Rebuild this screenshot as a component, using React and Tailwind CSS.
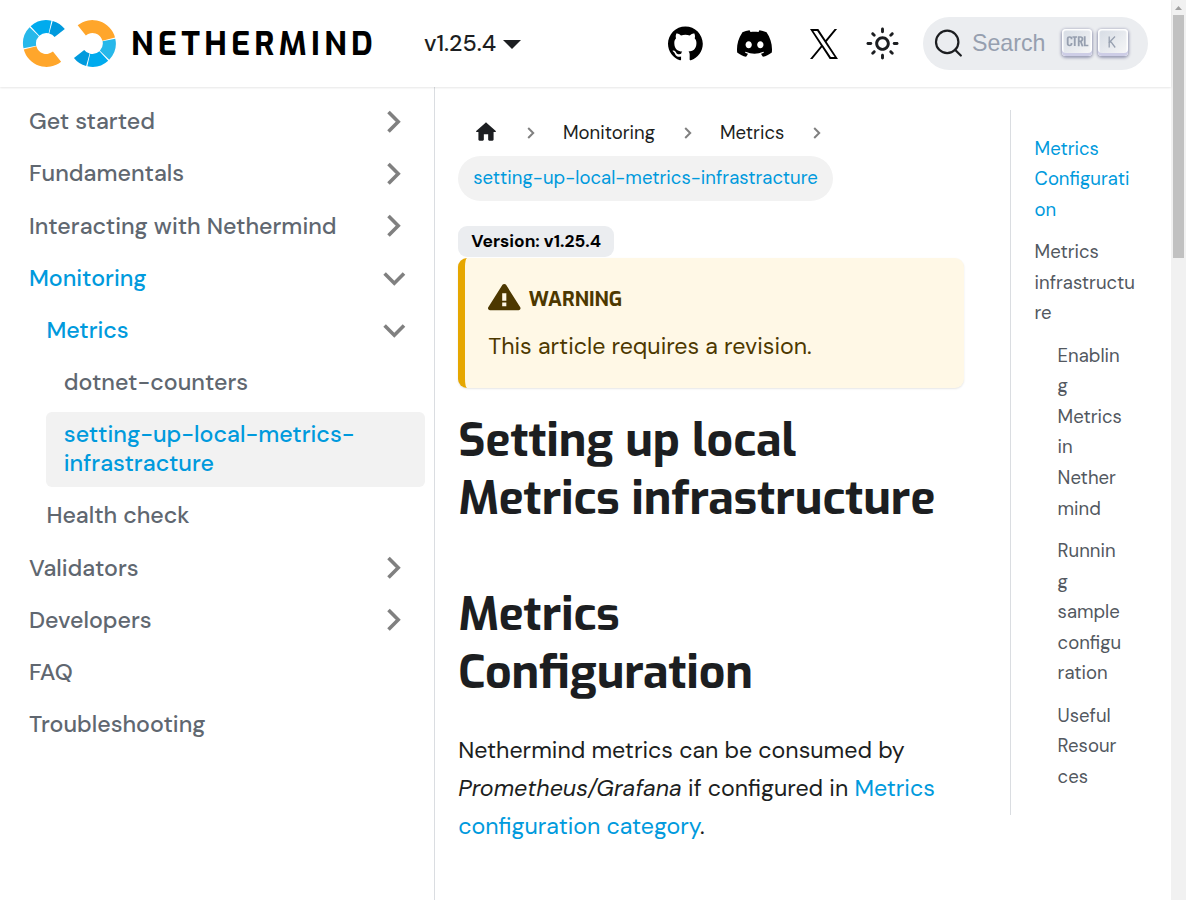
import React from "react";

const polar = (cx, cy, r, deg) => {
  const a = (deg * Math.PI) / 180;
  return `${(cx + r * Math.cos(a)).toFixed(2)} ${(cy - r * Math.sin(a)).toFixed(2)}`;
};

const segment = (a0, a1) =>
  `M${polar(24, 24, 23.4, a0)}A23.4 23.4 0 0 0 ${polar(24, 24, 23.4, a1)}L${polar(24, 24, 10.4, a1)}A10.4 10.4 0 0 1 ${polar(24, 24, 10.4, a0)}Z`;

const ring = [
  [38, 74.5, "#009add"],
  [77.5, 132.5, "#00abee"],
  [136, 192, "#27b8ea"],
  [195, 309, "#ffa62b"],
];

function Ring() {
  return ring.map(([a, b, c]) => <path key={a} d={segment(a, b)} fill={c} />);
}

function Logo() {
  return (
    <svg className="-mt-px h-12 w-[94px] shrink-0" viewBox="0 0 94 48">
      <g transform="translate(.4 .5)">
        <Ring />
        <g transform="rotate(180 47 24)">
          <Ring />
        </g>
      </g>
    </svg>
  );
}

function Chevron({ open }) {
  return (
    <span className="flex w-[63px] shrink-0 items-center justify-center">
      <svg className={open ? "mt-px size-6 rotate-90" : "size-6"} viewBox="0 0 24 24" fill="none" stroke="#808080" strokeWidth="3.6">
        <path d="M6.5 2 L16.2 11.7 L6.5 21.4" />
      </svg>
    </span>
  );
}

const menu = [
  { t: "Get started", arrow: "closed" },
  { t: "Fundamentals", arrow: "closed" },
  { t: "Interacting with Nethermind", arrow: "closed" },
  { t: "Monitoring", arrow: "open", on: true },
  { t: "Metrics", arrow: "open", on: true, indent: "ml-[17.4px]" },
  { t: "dotnet-counters", indent: "ml-[34.8px]" },
  { lines: ["setting-up-local-metrics-", "infrastracture"], on: true, active: true, indent: "ml-[34.8px]" },
  { t: "Health check", indent: "ml-[17.4px]" },
  { t: "Validators", arrow: "closed" },
  { t: "Developers", arrow: "closed" },
  { t: "FAQ" },
  { t: "Troubleshooting" },
];

function Sidebar() {
  return (
    <aside className="w-[435px] shrink-0 border-r border-[#dadde1] py-[11.6px] pr-[9px] pl-[11.6px]">
      <ul className="flex flex-col gap-[5.8px]">
        {menu.map((m, i) => (
          <li
            key={i}
            className={`flex justify-between rounded-[5.8px] text-[23.2px] leading-[29px] font-medium whitespace-nowrap ${m.indent || ""} ${m.on ? "text-[#009add]" : "text-[#606770]"} ${m.active ? "bg-[#f2f2f2]" : ""}`}
          >
            <a className="py-[8.7px] pl-[17.4px]">
              {m.t || m.lines.map((l) => <span key={l} className="block">{l}</span>)}
            </a>
            {m.arrow && <Chevron open={m.arrow === "open"} />}
          </li>
        ))}
      </ul>
    </aside>
  );
}

function Key({ children }) {
  return (
    <kbd className="flex h-[27px] w-[30px] items-center justify-center rounded-[4px] bg-linear-to-br from-[#d5dbe4] to-[#f8f8f8] pb-[2px] text-[#969faf] shadow-[inset_0_-3px_0_0_#cdcde6,inset_0_0_1px_1.5px_#fff,0_1px_3px_1px_rgba(30,35,90,0.4)]">
      {children}
    </kbd>
  );
}

function Navbar() {
  return (
    <header className="relative z-10 flex h-[87px] shrink-0 items-center bg-white pr-[23px] pl-[22px] shadow-[0_1px_2px_0_rgba(0,0,0,0.1)]">
      <Logo />
      <span className="ml-[15px] w-[292.500px] font-['Exo','Roboto',sans-serif] text-[32px] leading-none font-bold tracking-[4.250px] text-black">NETHERMIND</span>
      <span className="flex w-[244.500px] items-center pl-[.5px] text-[23.2px] font-medium text-[#1c1e21]">
        v1.25.4
        <svg className="mt-[2px] ml-[7px] h-[9px] w-[18px]" viewBox="0 0 18 9"><path d="M0 0H18L9 9Z" fill="currentColor" /></svg>
      </span>
      <svg className="size-[34.800px] shrink-0" viewBox="0 0 24 24">
        <path d="M12 .297c-6.63 0-12 5.373-12 12 0 5.303 3.438 9.8 8.205 11.385.6.113.82-.258.82-.577 0-.285-.01-1.04-.015-2.04-3.338.724-4.042-1.61-4.042-1.61C4.422 18.07 3.633 17.7 3.633 17.7c-1.087-.744.084-.729.084-.729 1.205.084 1.838 1.236 1.838 1.236 1.07 1.835 2.809 1.305 3.495.998.108-.776.417-1.305.76-1.605-2.665-.3-5.466-1.332-5.466-5.93 0-1.31.465-2.38 1.235-3.22-.135-.303-.54-1.523.105-3.176 0 0 1.005-.322 3.3 1.23.96-.267 1.98-.399 3-.405 1.02.006 2.04.138 3 .405 2.28-1.552 3.285-1.23 3.285-1.23.645 1.653.24 2.873.12 3.176.765.84 1.23 1.91 1.23 3.22 0 4.61-2.805 5.625-5.475 5.92.42.36.81 1.096.81 2.22 0 1.606-.015 2.896-.015 3.286 0 .315.21.69.825.57C20.565 22.092 24 17.592 24 12.297c0-6.627-5.373-12-12-12" />
      </svg>
      <svg className="ml-[34px] size-[35px] shrink-0" viewBox="0 0 24 24">
        <path d="M20.317 4.3698a19.7913 19.7913 0 00-4.8851-1.5152.0741.0741 0 00-.0785.0371c-.211.3753-.4447.8648-.6083 1.2495-1.8447-.2762-3.68-.2762-5.4868 0-.1636-.3933-.4058-.8742-.6177-1.2495a.077.077 0 00-.0785-.037 19.7363 19.7363 0 00-4.8852 1.515.0699.0699 0 00-.0321.0277C.5334 9.0458-.319 13.5799.0992 18.0578a.0824.0824 0 00.0312.0561c2.0528 1.5076 4.0413 2.4228 5.9929 3.0294a.0777.0777 0 00.0842-.0276c.4616-.6304.8731-1.2952 1.226-1.9942a.076.076 0 00-.0416-.1057c-.6528-.2476-1.2743-.5495-1.8722-.8923a.077.077 0 01-.0076-.1277c.1258-.0943.2517-.1923.3718-.2914a.0743.0743 0 01.0776-.0105c3.9278 1.7933 8.18 1.7933 12.0614 0a.0739.0739 0 01.0785.0095c.1202.099.246.1981.3728.2924a.077.077 0 01-.0066.1276 12.2986 12.2986 0 01-1.873.8914.0766.0766 0 00-.0407.1067c.3604.698.7719 1.3628 1.225 1.9932a.076.076 0 00.0842.0286c1.961-.6067 3.9495-1.5219 6.0023-3.0294a.077.077 0 00.0313-.0552c.5004-5.177-.8382-9.6739-3.5485-13.6604a.061.061 0 00-.0312-.0286zM8.02 15.3312c-1.1825 0-2.1569-1.0857-2.1569-2.419 0-1.3332.9555-2.4189 2.157-2.4189 1.2108 0 2.1757 1.0952 2.1568 2.419 0 1.3332-.9555 2.4189-2.1569 2.4189zm7.9748 0c-1.1825 0-2.1569-1.0857-2.1569-2.419 0-1.3332.9554-2.4189 2.1569-2.4189 1.2108 0 2.1757 1.0952 2.1568 2.419 0 1.3332-.946 2.4189-2.1568 2.4189Z" />
      </svg>
      <svg className="ml-[38px] h-[30px] w-[28px] shrink-0" viewBox="0 0 1200 1227" preserveAspectRatio="none">
        <path d="M714.163 519.284L1160.89 0H1055.03L667.137 450.887L357.328 0H0L468.492 681.821L0 1226.37H105.866L515.491 750.218L842.672 1226.37H1200L714.137 519.284H714.163ZM569.165 687.828L521.697 619.934L144.011 79.6944H306.615L611.412 515.685L658.88 583.579L1055.08 1150.3H892.476L569.165 687.854V687.828Z" />
      </svg>
      <svg className="ml-[27px] size-[35px] shrink-0" viewBox="0 0 24 24">
        <path fill="#1c1e21" d="M12,9c1.65,0,3,1.35,3,3s-1.35,3-3,3s-3-1.35-3-3S10.35,9,12,9 M12,7c-2.76,0-5,2.24-5,5s2.24,5,5,5s5-2.24,5-5 S14.76,7,12,7L12,7z M2,13l2,0c0.55,0,1-0.45,1-1s-0.45-1-1-1l-2,0c-0.55,0-1,0.45-1,1S1.45,13,2,13z M20,13l2,0c0.55,0,1-0.45,1-1 s-0.45-1-1-1l-2,0c-0.55,0-1,0.45-1,1S19.45,13,20,13z M11,2v2c0,0.55,0.45,1,1,1s1-0.45,1-1V2c0-0.55-0.45-1-1-1S11,1.45,11,2z M11,20v2c0,0.55,0.45,1,1,1s1-0.45,1-1v-2c0-0.55-0.45-1-1-1C11.45,19,11,19.45,11,20z M5.99,4.58c-0.39-0.39-1.03-0.39-1.41,0 c-0.39,0.39-0.39,1.03,0,1.41l1.06,1.06c0.39,0.39,1.03,0.39,1.41,0s0.39-1.03,0-1.41L5.99,4.58z M18.36,16.95 c-0.39-0.39-1.03-0.39-1.41,0c-0.39,0.39-0.39,1.03,0,1.41l1.06,1.06c0.39,0.39,1.03,0.39,1.41,0c0.39-0.39,0.39-1.03,0-1.41 L18.36,16.95z M19.42,5.99c0.39-0.39,0.39-1.03,0-1.41c-0.39-0.39-1.03-0.39-1.41,0l-1.06,1.06c-0.39,0.39-0.39,1.03,0,1.41 s1.03,0.39,1.41,0L19.42,5.99z M7.05,18.36c0.39-0.39,0.39-1.03,0-1.41c-0.39-0.39-1.03-0.39-1.41,0l-1.06,1.06 c-0.39,0.39-0.39,1.03,0,1.41s1.03,0.39,1.41,0L7.05,18.36z" />
      </svg>
      <button className="ml-auto flex h-[53px] w-[225px] items-center rounded-full bg-[#ebedf0] pl-[12px]">
        <svg className="-mt-px -ml-px size-[28px]" viewBox="0 0 28 28" fill="none" stroke="#1c1e21" strokeWidth="2.2">
          <circle cx="13.2" cy="12.9" r="11.2" /><path d="M21 20.7L26.8 26.5" strokeLinecap="round" />
        </svg>
        <span className="ml-[10px] w-[90px] text-left font-['Liberation_Sans'] text-[23.2px] text-[#969faf]">Search</span>
        <span className="-mt-[2px] flex gap-[6px]">
          <Key>
            <svg className="h-[11px] w-[23px]" viewBox="0 0 15 8.5" preserveAspectRatio="none" fill="none" stroke="#969faf" strokeWidth="1.2">
              <path d="M3.6 2.5V2c0-.8-.5-1.3-1.2-1.3S1.1 1.200 1.100 2v4c0 .8.500 1.300 1.300 1.300S3.600 6.800 3.600 6V5.500M4.200.8h3M5.700.8v7M8.300 8V.8h1.200c1.600 0 1.600 3.200 0 3.200H8.300M9.600 4l1.200 4M12.200.2v7.200h2.400" />
            </svg>
          </Key>
          <Key>
            <svg className="mr-[2px] h-[12px] w-[8px]" viewBox="0 0 8 12" fill="none" stroke="#969faf" strokeWidth="1.3">
              <path d="M1.200 .5V11.500M7 .5L1.400 6.200H3.200L7.200 11.500" />
            </svg>
          </Key>
        </span>
      </button>
    </header>
  );
}

function CrumbArrow() {
  return (
    <svg className="h-[12px] w-[8px] shrink-0" viewBox="0 0 8 12" fill="none" stroke="#808080" strokeWidth="2">
      <path d="M1.200 1L6.200 6L1.200 11" />
    </svg>
  );
}

function Article() {
  return (
    <main className="mr-[.8px] ml-[23.200px] flex w-[506px] shrink-0 flex-col pt-[23px] whitespace-nowrap">
      <nav className="text-[18.560px] leading-[30.600px] text-[#1c1e21]">
        <div className="flex h-[46px] items-center">
          <svg className="mb-[3px] ml-[14.800px] size-[26px] shrink-0" viewBox="0 0 24 24" fill="currentColor"><path d="M10 19v-5h4v5c0 .55.45 1 1 1h3c.55 0 1-.45 1-1v-7h1.700c.46 0 .68-.57.33-.87L12.670 3.600c-.38-.34-.96-.34-1.340 0l-8.360 7.530c-.34.300-.13.870.330.870H5v7c0 .55.450 1 1 1h3c.55 0 1-.45 1-1z" /></svg>
          <span className="ml-[28px] flex"><CrumbArrow /></span>
          <span className="ml-[28px] w-[94px]">Monitoring</span>
          <span className="ml-[27px] flex"><CrumbArrow /></span>
          <span className="ml-[28px] w-[66px]">Metrics</span>
          <span className="ml-[27px] flex"><CrumbArrow /></span>
        </div>
        <div className="flex h-[45px] w-[375px] items-center rounded-full bg-[#f2f2f2] pb-px pl-[15px] tracking-[0.02px] text-[#009add]">setting-up-local-metrics-infrastracture</div>
      </nav>
      <span className="mt-[25px] flex h-[31px] w-[156px] items-center rounded-[9px] bg-[#ebedf0] pb-px pl-[13px] text-[17.400px] font-bold text-black">Version: v1.25.4</span>
      <section className="mt-px h-[130px] rounded-[9px] border-l-[7px] border-[#e6a700] bg-[#fff8e6] pt-[24px] pl-[23px] text-[#4d3800] shadow-[0_1px_2px_0_rgba(0,0,0,0.1)]">
        <h5 className="flex h-[32px] items-center">
          <svg className="mb-[1.500px] h-[30px] w-[32.500px]" viewBox="0 0 16 16" preserveAspectRatio="none" fill="currentColor">
            <path fillRule="evenodd" d="M8.893 1.500c-.183-.310-.520-.500-.887-.500s-.703.190-.886.500L.138 13.499a.980.980 0 0 0 0 1.001c.193.310.530.501.886.501h13.964c.367 0 .704-.190.877-.500a1.030 1.030 0 0 0 .010-1.002L8.893 1.500zm.133 11.497H6.987v-2.003h2.039v2.003zm0-3.004H6.987V5.987h2.039v4.006z" />
          </svg>
          <span className="mt-[2px] ml-[8px] font-['Exo','Roboto',sans-serif] text-[20.300px] leading-[25px] font-bold">WARNING</span>
        </h5>
        <p className="mt-[13px] text-[23.200px] leading-[38.300px]">This article requires a revision.</p>
      </section>
      <h1 className="mt-[24px] font-['Exo','Roboto',sans-serif] text-[46.400px] leading-[58px] font-bold text-[#1c1e21]">
        <span className="block">Setting up local</span>
        <span className="block">Metrics infrastructure</span>
      </h1>
      <h2 className="mt-[58px] font-['Exo','Roboto',sans-serif] text-[46.400px] leading-[58px] font-bold text-[#1c1e21]">
        <span className="block">Metrics</span>
        <span className="block">Configuration</span>
      </h2>
      <p className="mt-[28.500px] text-[23.200px] leading-[38.280px] text-[#1c1e21]">
        <span className="block">Nethermind metrics can be consumed by</span>
        <span className="block"><em>Prometheus/Grafana</em> if configured in <a className="text-[#009add]">Metrics</a></span>
        <span className="block"><a className="text-[#009add]">configuration category</a>.</span>
      </p>
    </main>
  );
}

const toc = [
  { l: ["Metrics", "Configurati", "on"], c: "text-[#009add]" },
  { l: ["Metrics", "infrastructu", "re"], c: "" },
  { l: ["Enablin", "g", "Metrics", "in", "Nether", "mind"], c: "pl-[23px]" },
  { l: ["Runnin", "g", "sample", "configu", "ration"], c: "pl-[23px]" },
  { l: ["Useful", "Resour", "ces"], c: "pl-[23px]" },
];

function Toc() {
  return (
    <nav className="mt-[23px] ml-[45px] h-[705px] w-[138px] shrink-0 border-l border-[#dadde1] pt-[23.600px] pl-[23.600px]">
      <ul className="flex flex-col gap-[11.600px] text-[18.560px] leading-[30.624px] text-[#525860]">
        {toc.map((x, i) => (
          <li key={i} className={x.c}>
            {x.l.map((t, j) => <span key={j} className="block">{t}</span>)}
          </li>
        ))}
      </ul>
    </nav>
  );
}

export default function App() {
  return (
    <div className="flex h-[900px] w-[1186px] overflow-hidden bg-white font-['DM_Sans','Inter',sans-serif]">
      <div className="flex w-[1171px] flex-col">
        <Navbar />
        <div className="flex min-h-0 flex-1">
          <Sidebar />
          <Article />
          <Toc />
        </div>
      </div>
      <div className="flex w-[15px] flex-col items-center bg-[#f1f1f1]">
        <svg className="h-[15px] w-[15px]" viewBox="0 0 15 15"><path d="M4 10L7.500 6L11 10Z" fill="#a0a0a0" /></svg>
        <div className="h-[243px] w-[11px] bg-[#c1c1c1]" />
      </div>
    </div>
  );
}
